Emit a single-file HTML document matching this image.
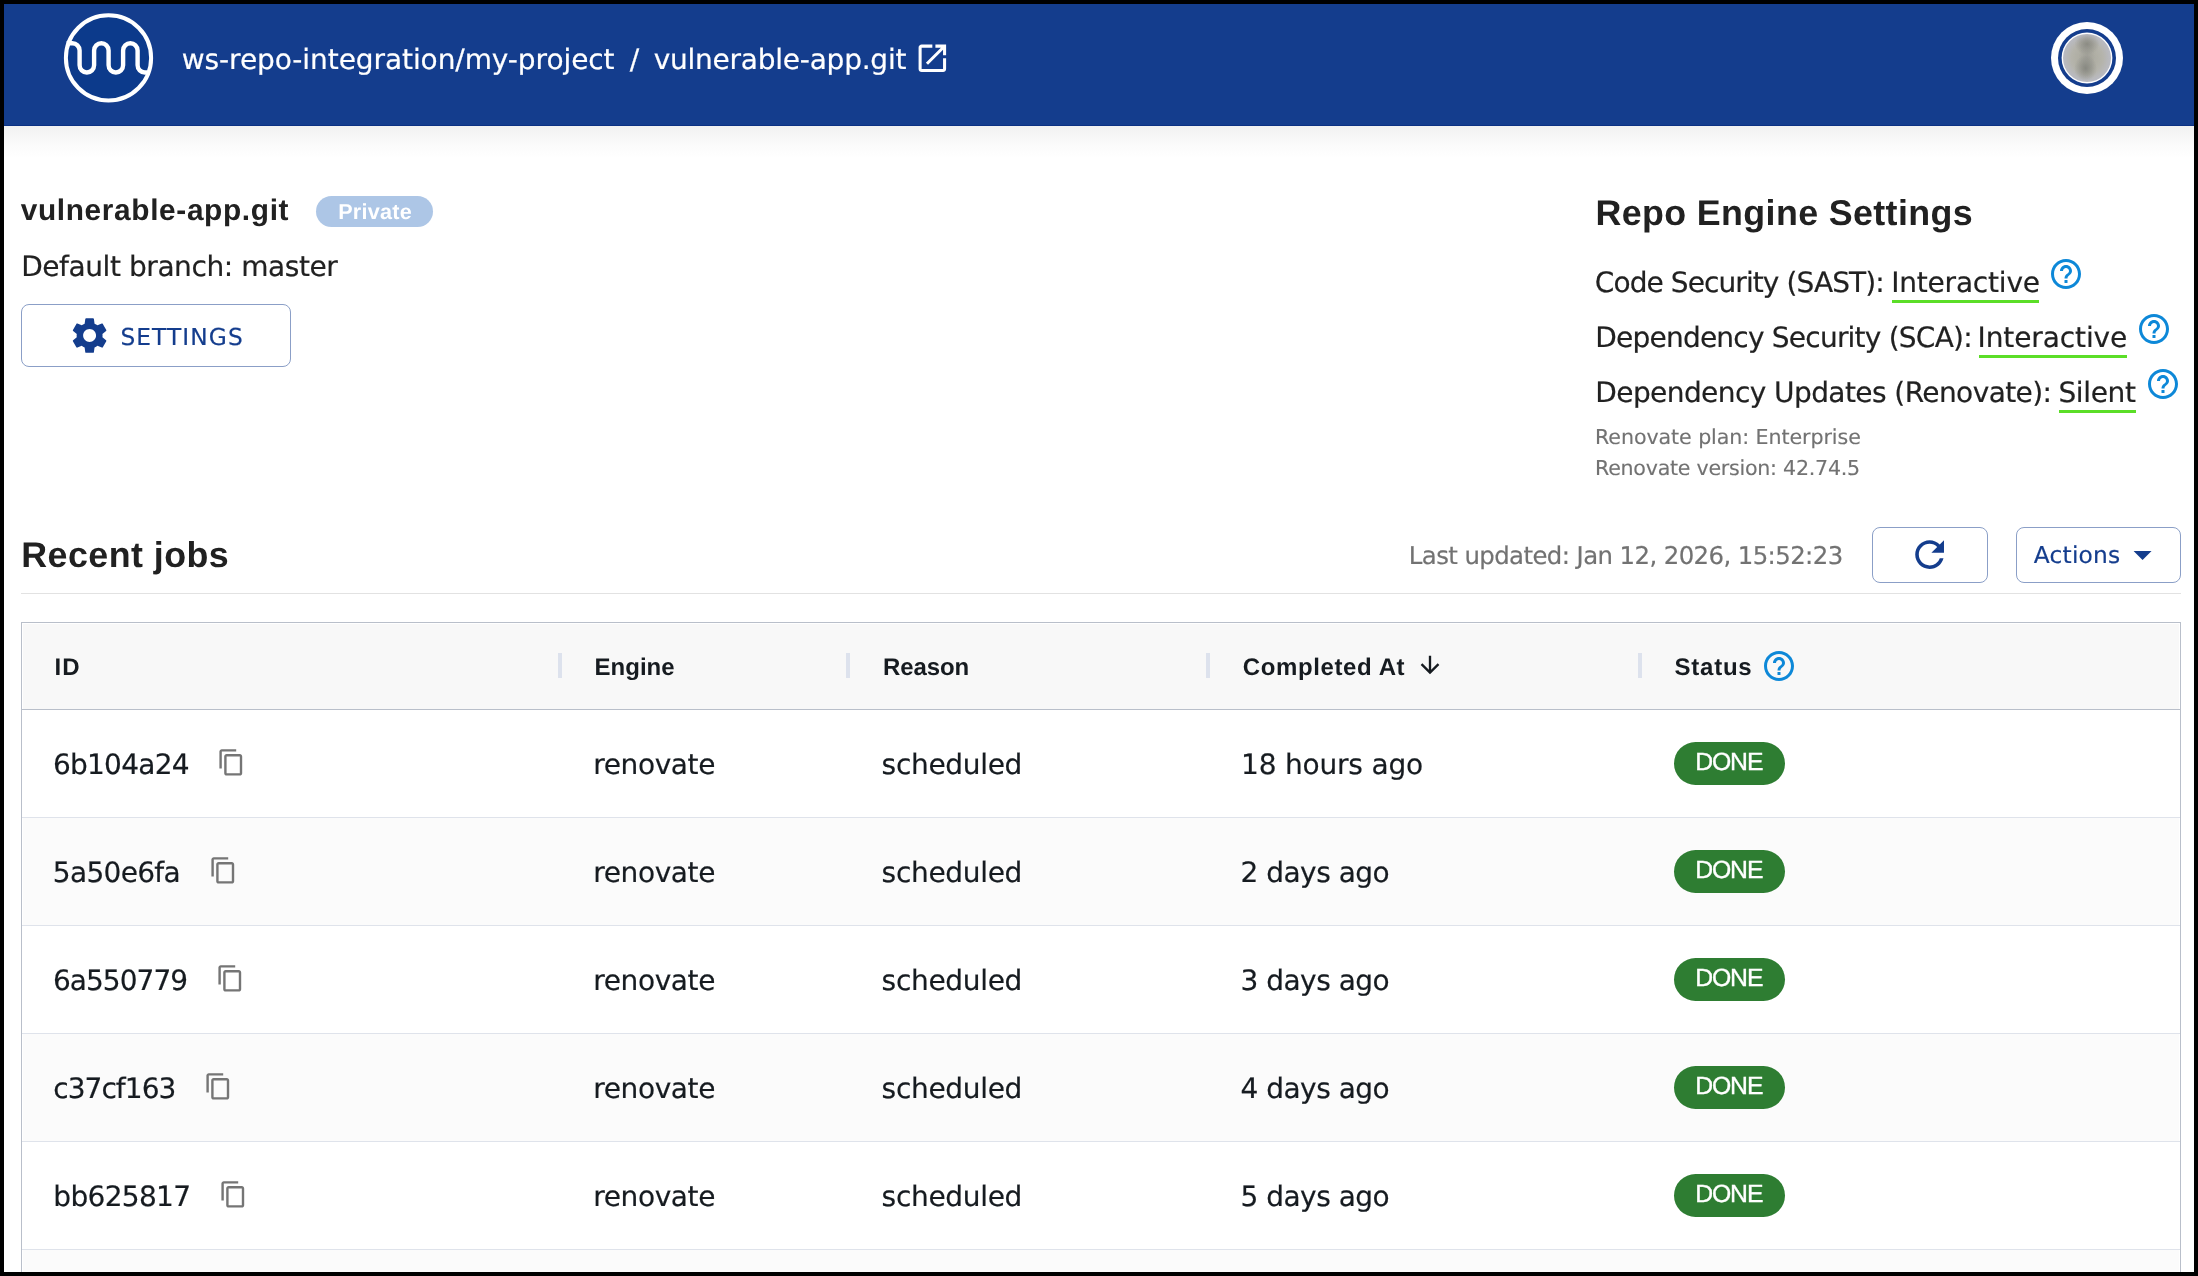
<!DOCTYPE html>
<html lang="en">
<head>
<meta charset="utf-8">
<title>vulnerable-app.git - Repository</title>
<style>
*{box-sizing:border-box}
html,body{margin:0;padding:0}
@media (min-resolution:1.5dppx){html{zoom:.5}}
body{position:relative;width:2198px;height:1276px;overflow:hidden;background:#fff;color:#212121;font-family:"DejaVu Sans","Liberation Sans",sans-serif;font-size:28.2px}
.frame{position:absolute;left:0;top:0;width:2198px;height:1276px;border:4px solid #000;z-index:50;pointer-events:none}
.t{position:absolute;white-space:pre;margin:0;padding:0;font-weight:400;will-change:transform;text-rendering:geometricPrecision}
.dv{font-family:"DejaVu Sans","Liberation Sans",sans-serif}
.lib{font-family:"Liberation Sans","DejaVu Sans",sans-serif}
.b{font-weight:700}
.s{-webkit-text-stroke:0.2px currentColor}
.ic{position:absolute;display:block}
header,main,section,nav,aside{position:absolute;display:block}
header{left:0;top:0;width:2198px;height:126px;background:#143d8d;border-bottom:1px solid #0b3183;color:#fff;z-index:2}
header .t{color:#fff}
.shadow{position:absolute;left:0;top:126px;width:2198px;height:32px;background:linear-gradient(to bottom,#f1f1f1 0,#f6f6f6 30%,#fbfbfb 62%,#fff 100%)}
.logo{position:absolute;left:62px;top:11px}
.avatar{position:absolute;left:2050.8px;top:21.6px;width:72.6px;height:72.6px;border-radius:50%;background:#fff}
.avatar i{position:absolute;left:7.2px;top:7.2px;width:58.2px;height:58.2px;border-radius:50%;background:#143d8d}
.avatar b{position:absolute;left:12.1px;top:12.1px;width:48.4px;height:48.4px;border-radius:50%;box-shadow:0 0 0 1.4px #fdfdfe;background:radial-gradient(ellipse 26% 22% at 50% 21%,rgba(136,136,129,.9) 0,rgba(143,143,136,.5) 55%,rgba(150,150,144,0) 100%),radial-gradient(ellipse 24% 27% at 47% 71%,rgba(132,133,126,.9) 0,rgba(140,141,134,.5) 55%,rgba(150,150,144,0) 100%),radial-gradient(ellipse 17% 46% at 50% 48%,rgba(150,150,143,.55) 0,rgba(150,150,143,0) 100%),radial-gradient(circle closest-side at 50% 50%,#a9a89f 0,#b1b0a6 45%,#b5b4ac 66%,#b9bac1 96%),#b9bac1}
main{left:0;top:126px;width:2198px;height:1150px}
.chip{position:absolute;border-radius:100px}
.private{left:316px;top:196px;width:117px;height:31px;background:#adc6e6}
.chip .t,.row .done .t{color:#fff}
.btn{position:absolute;border:1px solid #8b9fc7;border-radius:8px;background:#fff;color:#143d8d}
.btn .t{color:#143d8d}
.ul{position:absolute;height:3px;background:#5bde27}
.muted{color:#727272}
.hr{position:absolute;left:21px;top:593px;width:2160px;height:1px;background:#e2e2e2}
.grid{position:absolute;left:21px;top:622px;width:2160px;height:660px;border:1px solid #b9bfca;background:#fff}
.hrow{position:absolute;left:1px;top:1px;width:2156px;height:85px;background:#f8f8f8}
.hline{position:absolute;left:0;top:86px;width:2158px;height:1px;background:#b9bfca}
.sep{position:absolute;top:30px;width:4px;height:25px;background:#dde2ed}
.row{position:absolute;left:0;width:2158px;height:108px;border-bottom:1px solid #dfe3eb}
.row.alt{background:linear-gradient(#fbfbfb,#fbfbfb) 1px 0/2156px 100% no-repeat}
.row .t,.hrow .t{color:#161b20}
.done{position:absolute;left:1652px;top:32px;width:111px;height:43px;border-radius:22px;background:#2e7d32}
</style>
</head>
<body>
<header>
<svg class="logo" width="94" height="94" viewBox="0 0 94 94" aria-hidden="true"><circle cx="46.5" cy="46.9" r="42.6" fill="#0c3a8b" stroke="#fff" stroke-width="4"/><path d="M4.6 32.3 H10.35 a7.25 7.25 0 0 1 7.25 7.25 V54.2 a7.25 7.25 0 0 0 14.5 0 V39.55 a7.25 7.25 0 0 1 14.5 0 V54.2 a7.25 7.25 0 0 0 14.5 0 V39.55 a7.25 7.25 0 0 1 14.5 0 V54.2 a7.25 7.25 0 0 0 7.25 7.25 H85" fill="none" stroke="#fff" stroke-width="4.4"/></svg>
<nav aria-label="breadcrumb"><a class="t s" style="left:181px;top:42px;padding-left:0.77px;font-size:28px;line-height:35px;letter-spacing:-0.08px;">ws-repo-integration/my-project</a><span class="t s" style="left:629px;top:42px;padding-left:0.72px;font-size:28px;line-height:35px;letter-spacing:0px;">/</span><a class="t s" style="left:653px;top:42px;padding-left:0.73px;font-size:28px;line-height:35px;letter-spacing:-0.24px;">vulnerable-app.git</a><svg class="ic " viewBox="0 0 24 24" width="36.7" height="36.7" style="left:914.25px;top:39.9px" fill="#fff" aria-hidden="true"><path d="M19 19H5V5h7V3H5c-1.11 0-2 .9-2 2v14c0 1.1.89 2 2 2h14c1.1 0 2-.9 2-2v-7h-2v7zM14 3v2h3.59l-9.83 9.83 1.41 1.41L19 6.41V10h2V3h-7z"/></svg></nav>
<div class="avatar"><i></i><b></b></div>
</header>
<div class="shadow"></div>
<main>
<section class="repo">
<h1 class="t lib b" style="left:20px;top:66px;padding-left:0.66px;font-size:29.8px;line-height:37px;letter-spacing:0.66px;">vulnerable-app.git</h1><div class="chip private" style="top:70px"><span class="t lib b" style="left:22px;top:2px;padding-left:0.15px;font-size:21.6px;line-height:27px;letter-spacing:0.25px;">Private</span></div>
<p class="t s" style="left:21px;top:123px;padding-left:0.2px;font-size:28px;line-height:35px;letter-spacing:-0.43px;">Default branch: master</p>
<div class="btn" style="left:21px;top:178px;width:270px;height:63px"><svg class="ic " viewBox="0 0 24 24" width="43.2" height="43.2" style="left:45.95px;top:8.85px" fill="#143d8d" aria-hidden="true"><path d="M19.14 12.94c.04-.3.06-.61.06-.94 0-.32-.02-.64-.07-.94l2.03-1.58c.18-.14.23-.41.12-.61l-1.92-3.32c-.12-.22-.37-.29-.59-.22l-2.39.96c-.5-.38-1.03-.7-1.62-.94l-.36-2.54c-.04-.24-.24-.41-.48-.41h-3.84c-.24 0-.43.17-.47.41l-.36 2.54c-.59.24-1.13.57-1.62.94l-2.39-.96c-.22-.08-.47 0-.59.22L2.74 8.87c-.12.21-.08.47.12.61l2.03 1.58c-.05.3-.09.63-.09.94s.02.64.07.94l-2.03 1.58c-.18.14-.23.41-.12.61l1.92 3.32c.12.22.37.29.59.22l2.39-.96c.5.38 1.03.7 1.62.94l.36 2.54c.05.24.24.41.48.41h3.84c.24 0 .44-.17.47-.41l.36-2.54c.59-.24 1.13-.56 1.62-.94l2.39.96c.22.08.47 0 .59-.22l1.92-3.32c.12-.22.07-.47-.12-.61l-2.01-1.58zM12 15.6c-1.98 0-3.6-1.62-3.6-3.6s1.62-3.6 3.6-3.6 3.6 1.62 3.6 3.6-1.62 3.6-3.6 3.6z"/></svg><span class="t s" style="left:98px;top:18px;padding-left:0.43px;font-size:23.3px;line-height:29px;letter-spacing:1.08px;">SETTINGS</span></div>
</section>
<aside class="engine">
<h2 class="t lib b" style="left:1595px;top:65px;padding-left:0.5px;font-size:35.8px;line-height:45px;letter-spacing:0.38px;">Repo Engine Settings</h2>
<div class="line"><span class="t s" style="left:1594px;top:139px;padding-left:0.77px;font-size:28px;line-height:35px;letter-spacing:-0.91px;">Code Security (SAST):</span><span class="t s" style="left:1891px;top:139px;padding-left:0.2px;font-size:28px;line-height:35px;letter-spacing:-0.2px;">Interactive</span><i class="ul" style="left:1892px;top:174px;width:147px"></i><svg class="ic " viewBox="0 0 24 24" width="36" height="36" style="left:2048px;top:130px" fill="#0d88d8" aria-hidden="true"><path d="M11 18h2v-2h-2v2zm1-16C6.48 2 2 6.48 2 12s4.48 10 10 10 10-4.48 10-10S17.52 2 12 2zm0 18c-4.41 0-8-3.59-8-8s3.59-8 8-8 8 3.59 8 8-3.59 8-8 8zm0-14c-2.21 0-4 1.79-4 4h2c0-1.1.9-2 2-2s2 .9 2 2c0 2-3 1.75-3 5h2c0-2.25 3-2.5 3-5 0-2.21-1.79-4-4-4z"/></svg></div>
<div class="line"><span class="t s" style="left:1595px;top:194px;padding-left:0.3px;font-size:28px;line-height:35px;letter-spacing:-0.78px;">Dependency Security (SCA):</span><span class="t s" style="left:1977px;top:194px;padding-left:0.6px;font-size:28px;line-height:35px;letter-spacing:-0.12px;">Interactive</span><i class="ul" style="left:1979px;top:229px;width:148px"></i><svg class="ic " viewBox="0 0 24 24" width="36" height="36" style="left:2136px;top:185px" fill="#0d88d8" aria-hidden="true"><path d="M11 18h2v-2h-2v2zm1-16C6.48 2 2 6.48 2 12s4.48 10 10 10 10-4.48 10-10S17.52 2 12 2zm0 18c-4.41 0-8-3.59-8-8s3.59-8 8-8 8 3.59 8 8-3.59 8-8 8zm0-14c-2.21 0-4 1.79-4 4h2c0-1.1.9-2 2-2s2 .9 2 2c0 2-3 1.75-3 5h2c0-2.25 3-2.5 3-5 0-2.21-1.79-4-4-4z"/></svg></div>
<div class="line"><span class="t s" style="left:1595px;top:249px;padding-left:0.3px;font-size:28px;line-height:35px;letter-spacing:-0.58px;">Dependency Updates (Renovate):</span><span class="t s" style="left:2058px;top:249px;padding-left:0.44px;font-size:28px;line-height:35px;letter-spacing:-0.36px;">Silent</span><i class="ul" style="left:2059px;top:284px;width:77px"></i><svg class="ic " viewBox="0 0 24 24" width="36" height="36" style="left:2145px;top:240px" fill="#0d88d8" aria-hidden="true"><path d="M11 18h2v-2h-2v2zm1-16C6.48 2 2 6.48 2 12s4.48 10 10 10 10-4.48 10-10S17.52 2 12 2zm0 18c-4.41 0-8-3.59-8-8s3.59-8 8-8 8 3.59 8 8-3.59 8-8 8zm0-14c-2.21 0-4 1.79-4 4h2c0-1.1.9-2 2-2s2 .9 2 2c0 2-3 1.75-3 5h2c0-2.25 3-2.5 3-5 0-2.21-1.79-4-4-4z"/></svg></div>
<p class="t muted s" style="left:1595px;top:298px;padding-left:0.06px;font-size:20.6px;line-height:26px;letter-spacing:-0.08px;-webkit-text-stroke-width:0.15px;">Renovate plan: Enterprise</p><p class="t muted s" style="left:1595px;top:329px;padding-left:0.06px;font-size:20.6px;line-height:26px;letter-spacing:-0.26px;-webkit-text-stroke-width:0.15px;">Renovate version: 42.74.5</p>
</aside>
<section class="jobs">
<h2 class="t lib b" style="left:21px;top:407px;padding-left:0.2px;font-size:35.8px;line-height:45px;letter-spacing:0.47px;">Recent jobs</h2>
<span class="t muted s" style="left:1408px;top:415px;padding-left:0.87px;font-size:24.4px;line-height:30px;letter-spacing:-0.59px;">Last updated: Jan 12, 2026, 15:52:23</span>
<div class="btn" style="left:1872px;top:401px;width:116px;height:56px"><svg class="ic " viewBox="0 0 24 24" width="43.2" height="43.2" style="left:35.4px;top:5.4px" fill="#143d8d" aria-hidden="true"><path d="M17.65 6.35C16.2 4.9 14.21 4 12 4c-4.42 0-7.99 3.58-7.99 8s3.57 8 7.99 8c3.73 0 6.84-2.55 7.73-6h-2.08c-.82 2.33-3.04 4-5.65 4-3.31 0-6-2.69-6-6s2.69-6 6-6c1.66 0 3.14.69 4.22 1.78L13 11h7V4l-2.35 2.35z"/></svg></div>
<div class="btn" style="left:2016px;top:401px;width:165px;height:56px"><span class="t s" style="left:16px;top:13px;padding-left:0.7px;font-size:23.3px;line-height:29px;letter-spacing:0.24px;">Actions</span><svg class="ic " viewBox="0 0 24 24" width="43.2" height="43.2" style="left:104.3px;top:5px" fill="#143d8d" aria-hidden="true"><path d="M7 10l5 5 5-5z"/></svg></div>
<div class="hr" style="top:467px"></div>
<div class="grid" role="table" style="top:496px">
<div class="hrow" role="row"><span class="t lib b" style="left:31px;top:29px;padding-left:0.38px;font-size:24px;line-height:30px;letter-spacing:1.19px;">ID</span><span class="t lib b" style="left:571px;top:29px;padding-left:0.58px;font-size:24px;line-height:30px;letter-spacing:-0.01px;">Engine</span><span class="t lib b" style="left:859px;top:29px;padding-left:0.88px;font-size:24px;line-height:30px;letter-spacing:-0.07px;">Reason</span><span class="t lib b" style="left:1219px;top:29px;padding-left:0.78px;font-size:24px;line-height:30px;letter-spacing:0.61px;">Completed At</span><span class="t lib b" style="left:1651px;top:29px;padding-left:0.57px;font-size:24px;line-height:30px;letter-spacing:0.75px;">Status</span><i class="sep" style="left:535px;top:29px"></i><i class="sep" style="left:823px;top:29px"></i><i class="sep" style="left:1183px;top:29px"></i><i class="sep" style="left:1615px;top:29px"></i><svg class="ic " viewBox="0 0 24 24" width="28" height="28" style="left:1392.85px;top:26.6px" fill="#161b20" aria-hidden="true"><path d="M20 12l-1.41-1.41L13 16.17V4h-2v12.17l-5.58-5.59L4 12l8 8 8-8z"/></svg><svg class="ic " viewBox="0 0 24 24" width="36" height="36" style="left:1738px;top:24px" fill="#0d88d8" aria-hidden="true"><path d="M11 18h2v-2h-2v2zm1-16C6.48 2 2 6.48 2 12s4.48 10 10 10 10-4.48 10-10S17.52 2 12 2zm0 18c-4.41 0-8-3.59-8-8s3.59-8 8-8 8 3.59 8 8-3.59 8-8 8zm0-14c-2.21 0-4 1.79-4 4h2c0-1.1.9-2 2-2s2 .9 2 2c0 2-3 1.75-3 5h2c0-2.25 3-2.5 3-5 0-2.21-1.79-4-4-4z"/></svg></div>
<div class="hline"></div>
<div class="row" role="row" style="top:87px"><span class="t s" style="left:30px;top:37px;padding-left:0.91px;font-size:28px;line-height:35px;letter-spacing:-0.74px;">6b104a24</span><svg class="ic " viewBox="0 0 24 24" width="28.8" height="28.8" style="left:194.9px;top:37.8px" fill="#757575" aria-hidden="true"><path d="M16 1H4c-1.1 0-2 .9-2 2v14h2V3h12V1zm3 4H8c-1.1 0-2 .9-2 2v14c0 1.1.9 2 2 2h11c1.1 0 2-.9 2-2V7c0-1.1-.9-2-2-2zm0 16H8V7h11v14z"/></svg><span class="t s" style="left:571px;top:37px;padding-left:0.26px;font-size:28px;line-height:35px;letter-spacing:-0.4px;">renovate</span><span class="t s" style="left:859px;top:37px;padding-left:0.62px;font-size:28px;line-height:35px;letter-spacing:-0.31px;">scheduled</span><span class="t s" style="left:1219px;top:37px;padding-left:0.02px;font-size:28px;line-height:35px;letter-spacing:-0.19px;">18 hours ago</span><span class="done" style="left:1652px;top:32px"><span class="t lib s" style="left:21px;top:5px;padding-left:0.15px;font-size:24.8px;line-height:31px;letter-spacing:-1.11px;-webkit-text-stroke-width:0.35px;">DONE</span></span></div>
<div class="row alt" role="row" style="top:195px"><span class="t s" style="left:30px;top:37px;padding-left:0.85px;font-size:28px;line-height:35px;letter-spacing:-0.69px;">5a50e6fa</span><svg class="ic " viewBox="0 0 24 24" width="28.8" height="28.8" style="left:186.9px;top:37.8px" fill="#757575" aria-hidden="true"><path d="M16 1H4c-1.1 0-2 .9-2 2v14h2V3h12V1zm3 4H8c-1.1 0-2 .9-2 2v14c0 1.1.9 2 2 2h11c1.1 0 2-.9 2-2V7c0-1.1-.9-2-2-2zm0 16H8V7h11v14z"/></svg><span class="t s" style="left:571px;top:37px;padding-left:0.26px;font-size:28px;line-height:35px;letter-spacing:-0.4px;">renovate</span><span class="t s" style="left:859px;top:37px;padding-left:0.62px;font-size:28px;line-height:35px;letter-spacing:-0.31px;">scheduled</span><span class="t s" style="left:1218px;top:37px;padding-left:0.45px;font-size:28px;line-height:35px;letter-spacing:-0.5px;">2 days ago</span><span class="done" style="left:1652px;top:32px"><span class="t lib s" style="left:21px;top:5px;padding-left:0.15px;font-size:24.8px;line-height:31px;letter-spacing:-1.11px;-webkit-text-stroke-width:0.35px;">DONE</span></span></div>
<div class="row" role="row" style="top:303px"><span class="t s" style="left:30px;top:37px;padding-left:0.91px;font-size:28px;line-height:35px;letter-spacing:-0.95px;">6a550779</span><svg class="ic " viewBox="0 0 24 24" width="28.8" height="28.8" style="left:193.9px;top:37.8px" fill="#757575" aria-hidden="true"><path d="M16 1H4c-1.1 0-2 .9-2 2v14h2V3h12V1zm3 4H8c-1.1 0-2 .9-2 2v14c0 1.1.9 2 2 2h11c1.1 0 2-.9 2-2V7c0-1.1-.9-2-2-2zm0 16H8V7h11v14z"/></svg><span class="t s" style="left:571px;top:37px;padding-left:0.26px;font-size:28px;line-height:35px;letter-spacing:-0.4px;">renovate</span><span class="t s" style="left:859px;top:37px;padding-left:0.62px;font-size:28px;line-height:35px;letter-spacing:-0.31px;">scheduled</span><span class="t s" style="left:1218px;top:37px;padding-left:0.45px;font-size:28px;line-height:35px;letter-spacing:-0.5px;">3 days ago</span><span class="done" style="left:1652px;top:32px"><span class="t lib s" style="left:21px;top:5px;padding-left:0.15px;font-size:24.8px;line-height:31px;letter-spacing:-1.11px;-webkit-text-stroke-width:0.35px;">DONE</span></span></div>
<div class="row alt" role="row" style="top:411px"><span class="t s" style="left:31px;top:37px;padding-left:0.31px;font-size:28px;line-height:35px;letter-spacing:-0.96px;">c37cf163</span><svg class="ic " viewBox="0 0 24 24" width="28.8" height="28.8" style="left:182.2px;top:37.8px" fill="#757575" aria-hidden="true"><path d="M16 1H4c-1.1 0-2 .9-2 2v14h2V3h12V1zm3 4H8c-1.1 0-2 .9-2 2v14c0 1.1.9 2 2 2h11c1.1 0 2-.9 2-2V7c0-1.1-.9-2-2-2zm0 16H8V7h11v14z"/></svg><span class="t s" style="left:571px;top:37px;padding-left:0.26px;font-size:28px;line-height:35px;letter-spacing:-0.4px;">renovate</span><span class="t s" style="left:859px;top:37px;padding-left:0.62px;font-size:28px;line-height:35px;letter-spacing:-0.31px;">scheduled</span><span class="t s" style="left:1218px;top:37px;padding-left:0.45px;font-size:28px;line-height:35px;letter-spacing:-0.5px;">4 days ago</span><span class="done" style="left:1652px;top:32px"><span class="t lib s" style="left:21px;top:5px;padding-left:0.15px;font-size:24.8px;line-height:31px;letter-spacing:-1.11px;-webkit-text-stroke-width:0.35px;">DONE</span></span></div>
<div class="row" role="row" style="top:519px"><span class="t s" style="left:31px;top:37px;padding-left:0.36px;font-size:28px;line-height:35px;letter-spacing:-0.68px;">bb625817</span><svg class="ic " viewBox="0 0 24 24" width="28.8" height="28.8" style="left:197.3px;top:37.8px" fill="#757575" aria-hidden="true"><path d="M16 1H4c-1.1 0-2 .9-2 2v14h2V3h12V1zm3 4H8c-1.1 0-2 .9-2 2v14c0 1.1.9 2 2 2h11c1.1 0 2-.9 2-2V7c0-1.1-.9-2-2-2zm0 16H8V7h11v14z"/></svg><span class="t s" style="left:571px;top:37px;padding-left:0.26px;font-size:28px;line-height:35px;letter-spacing:-0.4px;">renovate</span><span class="t s" style="left:859px;top:37px;padding-left:0.62px;font-size:28px;line-height:35px;letter-spacing:-0.31px;">scheduled</span><span class="t s" style="left:1218px;top:37px;padding-left:0.45px;font-size:28px;line-height:35px;letter-spacing:-0.5px;">5 days ago</span><span class="done" style="left:1652px;top:32px"><span class="t lib s" style="left:21px;top:5px;padding-left:0.15px;font-size:24.8px;line-height:31px;letter-spacing:-1.11px;-webkit-text-stroke-width:0.35px;">DONE</span></span></div>
<div class="row alt" role="row" style="top:627px"></div>
</div>
</section>
</main>
<div class="frame"></div>
</body>
</html>
